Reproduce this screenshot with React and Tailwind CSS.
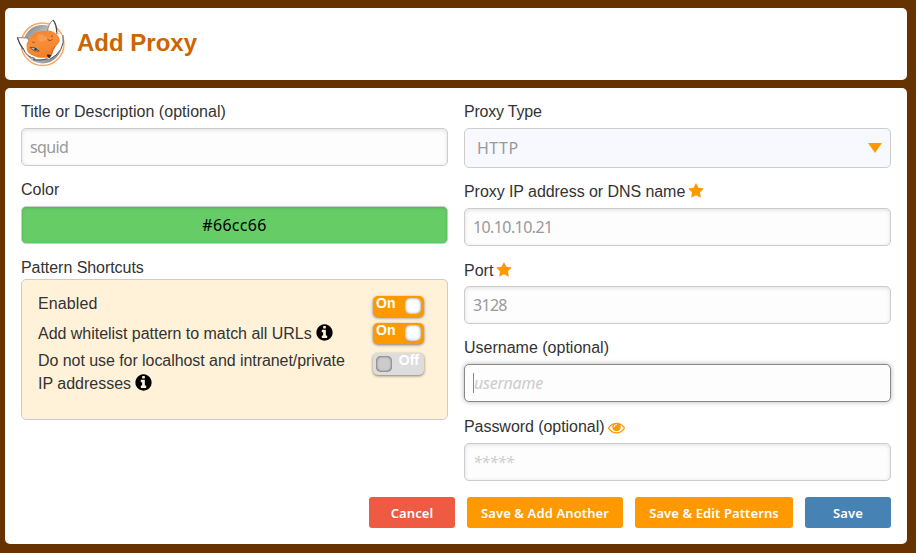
import React from "react";

const STAR =
  "M1728 647q0 22-26 48l-363 354 86 500q1 7 1 20 0 21-10.5 35.5t-30.5 14.5q-19 0-40-12l-449-236-449 236q-22 12-40 12-21 0-31.5-14.5t-10.5-35.5q0-6 2-20l86-500-364-354q-25-27-25-48 0-37 56-46l502-73 225-455q19-41 49-41t49 41l225 455 502 73q56 9 56 46z";
const INFO =
  "M1152 1376v-160q0-14-9-23t-23-9h-96v-512q0-14-9-23t-23-9h-320q-14 0-23 9t-9 23v160q0 14 9 23t23 9h96v320h-96q-14 0-23 9t-9 23v160q0 14 9 23t23 9h448q14 0 23-9t9-23zm-128-896v-160q0-14-9-23t-23-9h-192q-14 0-23 9t-9 23v160q0 14 9 23t23 9h192q14 0 23-9t9-23zm640 416q0 209-103 385.5t-279.5 279.5-385.5 103-385.5-103-279.5-279.5-103-385.5 103-385.5 279.5-279.5 385.5-103 385.5 103 279.5 279.5 103 385.5z";
const EYE =
  "M1664 960q-152-236-381-353 61 104 61 225 0 185-131.5 316.5t-316.5 131.5-316.5-131.5-131.5-316.5q0-121 61-225-229 117-381 353 133 205 333.5 326.5t434.5 121.5 434.5-121.5 333.5-326.5zm-720-384q0-20-14-34t-34-14q-125 0-214.5 89.5t-89.5 214.5q0 20 14 34t34 14 34-14 14-34q0-86 61-147t147-61q20 0 34-14t14-34zm848 384q0 34-20 69-140 230-376.5 368.5t-499.5 138.5-499.5-139-376.5-368q-20-35-20-69t20-69q140-229 376.5-368t499.5-139 499.5 139 376.5 368q20 35 20 69z";

function Glyph({ d, className }) {
  return (
    <svg viewBox="0 0 1792 1792" fill="currentColor" className={className}>
      <path d={d} />
    </svg>
  );
}

function FoxLogo() {
  return (
    <svg viewBox="0 0 56 56" className="-mt-1 h-14 w-14 shrink-0">
      <defs>
        <linearGradient id="disc" x1="0" y1="0" x2="0.9" y2="1">
          <stop offset="0" stopColor="#77787b" />
          <stop offset="0.4" stopColor="#bfc0c2" />
          <stop offset="0.75" stopColor="#a9aaad" />
          <stop offset="1" stopColor="#77787b" />
        </linearGradient>
        <linearGradient id="fur" x1="0" y1="0" x2="0.4" y2="1">
          <stop offset="0" stopColor="#f08032" />
          <stop offset="0.5" stopColor="#f98f3a" />
          <stop offset="1" stopColor="#f0802a" />
        </linearGradient>
      </defs>
      <circle cx="28.6" cy="30.2" r="21.3" fill="#fff" stroke="#fba765" strokeWidth="1.5" />
      <circle cx="28.6" cy="30.2" r="19.3" fill="url(#disc)" />
      {/* ears */}
      <path d="M3.4 23.6L13.8 24L15 28L9.3 35.2Q5.2 30 3.4 23.6Z" fill="#fff" stroke="#6b6c6e" strokeWidth="0.8" />
      <path d="M3.4 23.6Q5.2 30 9.3 35.2" fill="none" stroke="#48494b" strokeWidth="1.2" />
      <path d="M33.4 18Q34.2 9.4 39.2 6Q43 11.5 42.6 21Z" fill="#fff" stroke="#6b6c6e" strokeWidth="0.8" />
      <path d="M39.2 6Q43 11.5 42.6 18" fill="none" stroke="#48494b" strokeWidth="1.2" />
      {/* white cheeks */}
      <path
        d="M9.5 33Q10 38.2 13.4 41Q17 44.4 21.8 45.2L36.2 44.6Q43 41.6 46.8 35.4Q50.4 28.6 48.9 21L43 20L13 30Z"
        fill="#fff"
      />
      <path
        d="M48.9 21Q50.4 29 46.8 35.4Q42.6 42 36.2 44.9M9.2 34.4Q10.8 39.2 14.2 41.7Q17.4 43.8 20.8 44.4L19.4 46Q28 46.8 33.6 44.8"
        fill="none"
        stroke="#505153"
        strokeWidth="1"
      />
      {/* face */}
      <path
        d="M12.6 34Q11.8 29.8 14.2 26.4Q17 21 21.4 18.6Q26.2 17 34 16.6Q39.6 16.8 43.2 20.8Q46.4 24.6 45.6 27.4Q44 30.2 41.4 33Q38.8 37.2 37.8 41.4L35.6 43.2Q28.8 44.2 23 43.2Q17.4 41.8 14.6 39Q12.8 37 12.6 34Z"
        fill="url(#fur)"
      />
      <path d="M23.6 20.4Q29.6 19.8 33.6 24.6Q31.4 28.2 25.4 27.2Q22.2 24 23.6 20.4Z" fill="#ffae69" opacity="0.45" />
      {/* eyes and brows */}
      <path d="M16.2 33.4Q21 32.4 25.2 37Q20.2 37.6 17.6 35.2Z" fill="#c9c9c6" stroke="#5a4a3a" strokeWidth="0.9" />
      <circle cx="21.5" cy="35.3" r="1.2" fill="#38342f" />
      <path d="M33.6 24.8Q34.2 26.8 36.6 26.6L38.6 25.2" fill="none" stroke="#7d4a20" strokeWidth="0.9" />
      <path d="M18.4 28.2L20.6 28.6M37 22.6L38.8 21.8" stroke="#7c451c" strokeWidth="0.9" />
      <path d="M37.4 40.4Q38 35.4 41.2 32.2" fill="none" stroke="#98511f" strokeWidth="0.6" />
      <path d="M32.8 40.8Q35 40 37.4 41.2L35.6 44.2Q33 43.4 32.8 40.8Z" fill="#2e2a29" />
    </svg>
  );
}

function Label({ children }) {
  return (
    <div className="flex h-6 items-center pt-[2px] text-base leading-[22px] whitespace-pre text-[#333]">{children}</div>
  );
}

const FIELD =
  "flex h-[38px] items-center rounded-[5px] border border-[#ccc] bg-[#fdfdfd] px-2 font-['Noto_Sans',sans-serif] text-base shadow-[inset_0_1px_4px_rgba(0,0,0,0.12)]";

function Toggle({ on }) {
  return on ? (
    <div className="flex h-[21px] w-[51px] justify-between rounded-[5px] bg-[#ff9900] pr-[3px] pl-[3px] shadow-[0_1px_3px_rgba(0,0,0,0.5)]">
      <span className="text-sm leading-[14px] font-bold text-white">On</span>
      <span className="mt-[2px] h-4 w-4 rounded-[5px] bg-white shadow-[inset_0_0_3px_rgba(0,0,0,0.5)]" />
    </div>
  ) : (
    <div className="flex h-[22px] w-[51px] justify-between rounded-[5px] bg-[#ddd] pr-[5px] pl-[3px] shadow-[0_1px_3px_rgba(0,0,0,0.5)]">
      <span className="mt-[3px] h-4 w-4 rounded-[5px] bg-[#ccc] shadow-[inset_0_0_3px_rgba(0,0,0,0.75)]" />
      <span className="text-sm leading-[15px] font-bold text-white">Off</span>
    </div>
  );
}

function Button({ className, children }) {
  return (
    <button
      className={
        "h-[31px] rounded-[3px] pt-[2px] font-['Noto_Sans',sans-serif] text-[13px] font-semibold tracking-[0.1px] whitespace-nowrap text-white " +
        className
      }
    >
      {children}
    </button>
  );
}

export default function App() {
  return (
    <div className="flex h-[553px] w-[916px] flex-col gap-2 overflow-hidden bg-[#663300] pt-2 pr-[9px] pl-[5px] font-['Liberation_Sans',Arial,sans-serif]">
      <header className="flex h-[72px] items-center rounded-[5px] bg-white pl-[9px]">
        <FoxLogo />
        <h1 className="ml-[7px] pb-[2px] text-2xl font-bold text-[#cc6600]">Add Proxy</h1>
      </header>

      <main className="h-[456px] rounded-[5px] bg-white px-4 pt-[11px]">
        <div className="grid h-[398px] grid-cols-2 gap-4">
          <section className="flex flex-col">
            <Label>
              <span className="tracking-[0.03px]">Title or Description (optional)</span>
            </Label>
            <div className={FIELD + " mt-[5px] tracking-[-0.6px] text-[#999]"}>squid</div>
            <div className="mt-[11px]">
              <Label>Color</Label>
            </div>
            <div className="mt-[5px] flex h-[38px] items-center justify-center rounded-[5px] border border-[#ccc] bg-[#66cc66] font-['Noto_Sans',sans-serif] text-base tracking-[0.3px] text-black shadow-[inset_0_1px_3px_rgba(0,0,0,0.15)]">
              #66cc66
            </div>
            <div className="mt-[11px]">
              <Label>
                <span className="tracking-[-0.05px]">Pattern Shortcuts</span>
              </Label>
            </div>
            <div className="flex h-[141px] justify-between rounded-[5px] border border-[#ccc] bg-[#fff2d9] pr-[23px] pl-4 text-[#333]">
              <div className="flex flex-col pt-3 whitespace-nowrap">
                <div className="h-[30px] leading-6 tracking-[0.1px]">Enabled</div>
                <div className="flex h-[27px] items-start leading-6">
                  <span className="tracking-[-0.03px]">Add whitelist pattern to match all URLs</span>
                  <Glyph d={INFO} className="mt-px ml-[3px] h-[19px] w-[19px] text-black" />
                </div>
                <div className="leading-[23px] tracking-[-0.06px]">Do not use for localhost and intranet/private</div>
                <div className="flex items-start leading-[23px]">
                  IP addresses
                  <Glyph d={INFO} className="mt-px ml-[3px] h-[19px] w-[19px] text-black" />
                </div>
              </div>
              <div className="flex flex-col pt-4">
                <Toggle on />
                <div className="mt-[6px]">
                  <Toggle on />
                </div>
                <div className="mt-[9px]">
                  <Toggle />
                </div>
              </div>
            </div>
          </section>

          <section className="flex flex-col">
            <Label>
              <span className="tracking-[-0.2px]">Proxy Type</span>
            </Label>
            <div className="mt-[5px] flex h-10 items-center justify-between rounded-[5px] border border-[#ccc] bg-[#f8f8ff] pr-2 pl-3 font-['Noto_Sans',sans-serif] text-base tracking-[0.5px] text-[#999]">
              HTTP
              <svg viewBox="0 0 14 10" className="h-[10px] w-[14px]">
                <path d="M0 0H14L7 10Z" fill="#ff9900" />
              </svg>
            </div>
            <div className="mt-[11px]">
              <Label>
                <span className="tracking-[-0.06px]">Proxy IP address or DNS name</span>
                <Glyph d={STAR} className="-mt-[2px] ml-[3px] h-4 w-4 text-[#ff9900]" />
              </Label>
            </div>
            <div className={FIELD + " mt-[5px] tracking-[-0.6px] text-[#999]"}>10.10.10.21</div>
            <div className="mt-[12px]">
              <Label>
                Port
                <Glyph d={STAR} className="-mt-[2px] ml-[3px] h-4 w-4 text-[#ff9900]" />
              </Label>
            </div>
            <div className={FIELD + " mt-[4px] tracking-[-0.7px] text-[#999]"}>3128</div>
            <div className="mt-[11px]">
              <Label>Username (optional)</Label>
            </div>
            <div className="mt-[5px] flex h-[38px] items-center rounded-[5px] border border-[#888] bg-[#fdfdfd] px-2 font-['Noto_Sans',sans-serif] text-base tracking-[-0.25px] text-[#ccc] italic shadow-[0_0_5px_rgba(0,0,0,0.3)]">
              <span className="h-5 w-px bg-[#888]" />
              username
            </div>
            <div className="mt-[12px]">
              <Label>
                <span className="tracking-[-0.05px]">Password (optional)</span>
                <Glyph d={EYE} className="ml-1 h-[17px] w-[17px] text-[#ff9900]" />
              </Label>
            </div>
            <div className={FIELD + " mt-[5px] tracking-[-0.75px] text-[#ccc] italic"}>*****</div>
          </section>
        </div>

        <footer className="flex justify-end gap-3">
          <Button className="w-[86px] bg-[#ee5a42]">Cancel</Button>
          <Button className="w-[156px] bg-[#ff9900]">Save &amp; Add Another</Button>
          <Button className="w-[158px] bg-[#ff9900]">Save &amp; Edit Patterns</Button>
          <Button className="w-[86px] bg-[#4682b4]">Save</Button>
        </footer>
      </main>
    </div>
  );
}
